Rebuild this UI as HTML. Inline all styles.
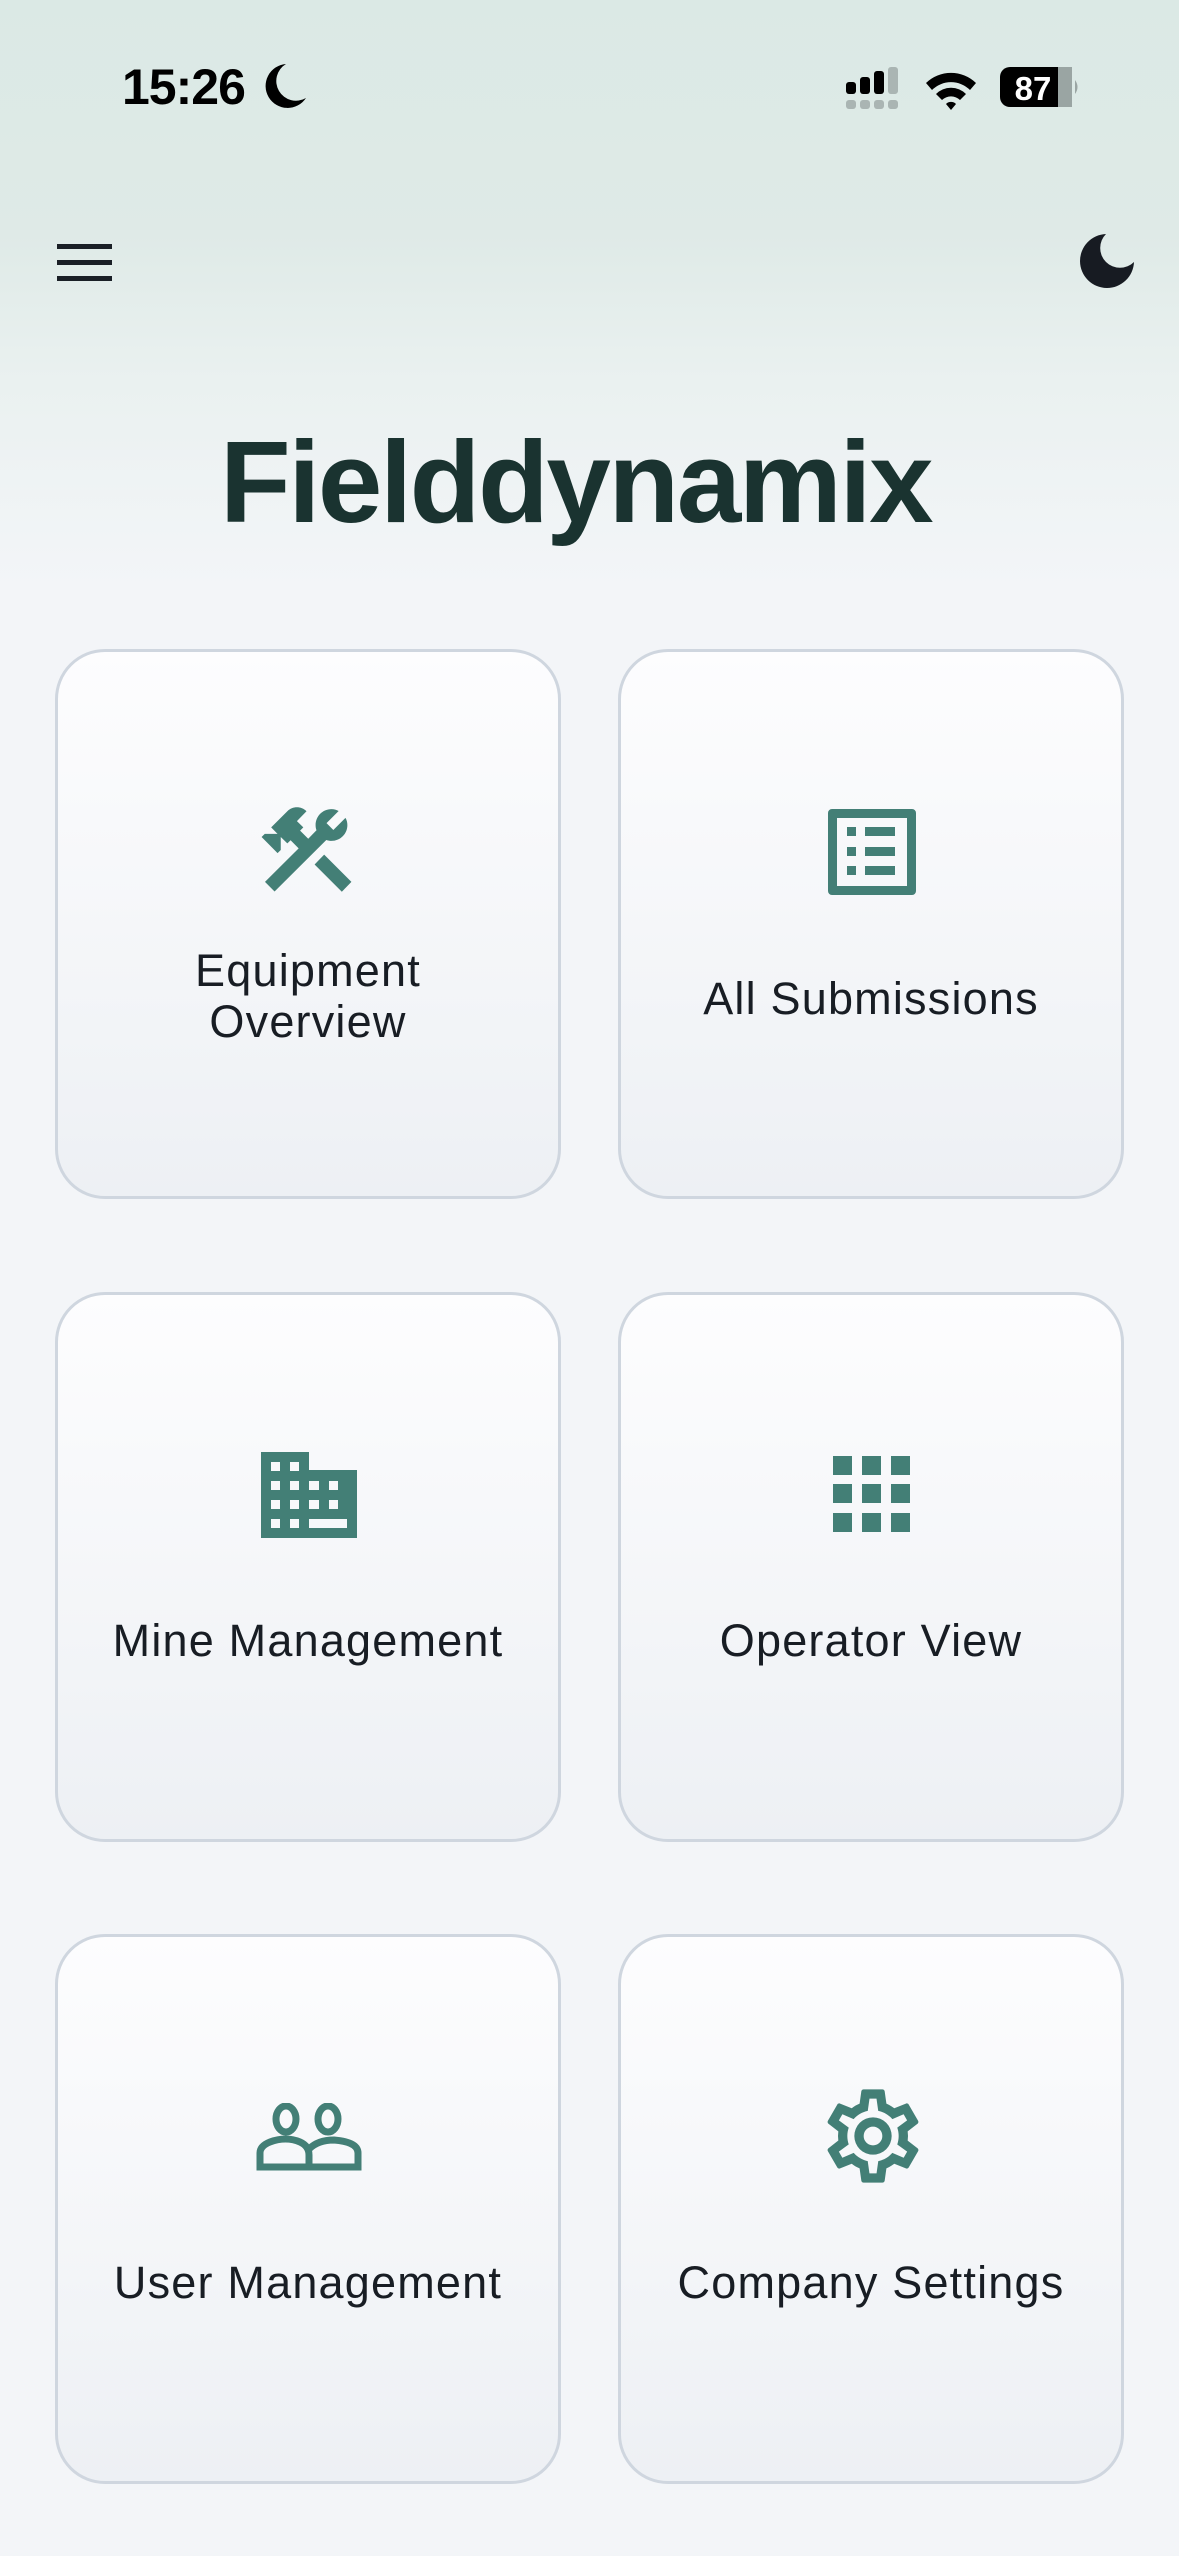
<!DOCTYPE html>
<html><head><meta charset="utf-8"><style>
*{margin:0;padding:0;box-sizing:border-box}
body{width:1179px;height:2556px;background:#f3f5f8;font-family:"Liberation Sans",sans-serif;position:relative;overflow:hidden}
.hdr{position:absolute;left:0;top:0;width:1179px;height:587px;background:linear-gradient(#dbe9e5 0%,#dfeae7 40%,#eaf1f0 65%,#f3f5f8 100%)}
.time{position:absolute;left:122px;top:58px;font-size:50px;font-weight:bold;color:#000;letter-spacing:-1px}
.title{position:absolute;left:-14px;width:1179px;top:412px;text-align:center;font-size:116px;font-weight:bold;color:#1a3330;letter-spacing:-2.5px;line-height:140px}
.card{position:absolute;width:506px;height:550px;border:3px solid #cfd6df;border-radius:50px;background:linear-gradient(#fdfdfe,#edf0f4)}
.lbl{position:absolute;left:0;width:100%;text-align:center;font-size:45px;color:#181d24;line-height:51px;letter-spacing:1.2px}
.card svg{position:absolute}
</style></head><body>
<div class="hdr"></div>
<div class="time">15:26</div>
<svg style="position:absolute;left:262px;top:62px" width="46" height="50" viewBox="0 0 46 50"><path d="M24 2 A22 22 0 1 0 44 36 A18 18 0 0 1 24 2Z" fill="#000"/></svg>
<svg style="position:absolute;left:840px;top:60px" width="240" height="55" viewBox="0 0 240 55">
<g fill="#000"><rect x="6" y="22" width="10" height="12" rx="3"/><rect x="20" y="17" width="10" height="17" rx="3"/><rect x="34" y="11" width="10" height="23" rx="3"/></g>
<rect x="48" y="7" width="10" height="27" rx="3" fill="#aab5b3"/>
<g fill="#aab5b3"><rect x="6" y="40" width="10" height="9" rx="3"/><rect x="20" y="40" width="10" height="9" rx="3"/><rect x="34" y="40" width="10" height="9" rx="3"/><rect x="48" y="40" width="10" height="9" rx="3"/></g>
<path d="M86 23 A36 36 0 0 1 136 23 L130 30 A27 27 0 0 0 92 30Z M96 34 A21 21 0 0 1 126 34 L120 40 A13 13 0 0 0 102 40Z M106 44 A7 7 0 0 1 116 44 L111 50Z" fill="#000"/>
<rect x="160" y="7" width="72" height="40" rx="10" fill="#000"/>
<rect x="218" y="7" width="14" height="40" fill="#9aa5a3"/>
<path d="M235 20 Q240 27 235 34Z" fill="#9aa5a3"/>
<text x="193" y="40" font-size="33" font-weight="bold" fill="#fff" text-anchor="middle" font-family="Liberation Sans">87</text>
</svg>
<svg style="position:absolute;left:57px;top:244px" width="55" height="37"><g fill="#1a1f26"><rect y="0" width="55" height="5"/><rect y="16" width="55" height="5"/><rect y="32" width="55" height="5"/></g></svg>
<svg style="position:absolute;left:1078px;top:232px" width="58" height="58" viewBox="0 0 58 58"><path d="M28 2 A27 27 0 1 0 56 30 A16 16 0 0 1 28 2Z" fill="#171b22"/></svg>
<div class="title">Fielddynamix</div>

<div class="card" style="left:55px;top:649px">
<svg style="left:194px;top:143px" width="109" height="109" viewBox="0 0 24 24"><path fill="#437f76" d="M13.78 15.3L19.78 21.3L21.89 19.14L15.89 13.14L13.78 15.3M17.5 10.1C17.11 10.1 16.69 10.05 16.36 9.91L4.97 21.25L2.86 19.14L10.27 11.74L8.5 9.960L7.78 10.66L6.33 9.25V12.11L5.63 12.81L2.11 9.25L2.81 8.55H5.62L4.22 7.14L7.78 3.58C8.95 2.41 10.830 2.41 12 3.58L9.89 5.74L11.3 7.14L10.59 7.85L12.38 9.63L14.2 7.75C14.06 7.42 14 7 14 6.63C14 4.66 15.56 3.11 17.5 3.11C18.09 3.11 18.61 3.25 19.08 3.53L16.41 6.2L17.91 7.7L20.58 5.03C20.86 5.5 21 6 21 6.63C21 8.550 19.45 10.1 17.5 10.1Z"/></svg>
<div class="lbl" style="top:293px">Equipment<br>Overview</div>
</div>

<div class="card" style="left:618px;top:649px">
<svg style="left:207px;top:157px" width="88" height="88" viewBox="0 0 88 88"><g fill="#437f76"><path fill-rule="evenodd" d="M0 4a4 4 0 0 1 4-4h80a4 4 0 0 1 4 4v78a4 4 0 0 1-4 4H4a4 4 0 0 1-4-4Z M9 9v68h70V9Z"/><rect x="19" y="18" width="9" height="9"/><rect x="37" y="18" width="30" height="9"/><rect x="19" y="38" width="9" height="9"/><rect x="37" y="38" width="30" height="9"/><rect x="19" y="57" width="9" height="9"/><rect x="37" y="57" width="30" height="9"/></g></svg>
<div class="lbl" style="top:321px">All Submissions</div>
</div>

<div class="card" style="left:55px;top:1292px">
<svg style="left:203px;top:157px" width="96" height="86" viewBox="0 0 96 86"><path fill="#437f76" fill-rule="evenodd" d="M0 0h48v18h48v68H0Z M10 10h9v9h-9Z M29 10h9v9h-9Z M10 29h9v9h-9Z M29 29h9v9h-9Z M10 48h9v9h-9Z M29 48h9v9h-9Z M10 67h9v9h-9Z M29 67h9v9h-9Z M48 29h10v9h-10Z M48 48h10v9h-10Z M68 29h9v9h-9Z M68 48h9v9h-9Z M48 67h38v9h-38Z"/></svg>
<div class="lbl" style="top:320px">Mine Management</div>
</div>

<div class="card" style="left:618px;top:1292px">
<svg style="left:212px;top:161px" width="78" height="78" viewBox="0 0 78 78"><g fill="#437f76"><rect x="0" y="0" width="19" height="19"/><rect x="29" y="0" width="19" height="19"/><rect x="58" y="0" width="19" height="19"/><rect x="0" y="28" width="19" height="19"/><rect x="29" y="28" width="19" height="19"/><rect x="58" y="28" width="19" height="19"/><rect x="0" y="57" width="19" height="19"/><rect x="29" y="57" width="19" height="19"/><rect x="58" y="57" width="19" height="19"/></g></svg>
<div class="lbl" style="top:320px">Operator View</div>
</div>

<div class="card" style="left:55px;top:1934px">
<svg style="left:198px;top:166px" width="106" height="68" viewBox="0 0 106 68"><g fill="none" stroke="#437f76" stroke-width="7"><ellipse cx="30" cy="16" rx="10" ry="13"/><ellipse cx="72" cy="16" rx="10" ry="13"/><path d="M4 64V50Q4 43 14 39Q30 33 44 39Q53 43 53 52V64Z"/><path d="M53 46Q62 37 78 37Q102 39 102 50V64H53"/></g></svg>
<div class="lbl" style="top:320px">User Management</div>
</div>

<div class="card" style="left:618px;top:1934px">
<svg style="left:196px;top:143px" width="112" height="112" viewBox="0 0 24 24"><path fill="#437f76" d="M12 8A4 4 0 0 1 16 12A4 4 0 0 1 12 16A4 4 0 0 1 8 12A4 4 0 0 1 12 8M12 10A2 2 0 0 0 10 12A2 2 0 0 0 12 14A2 2 0 0 0 14 12A2 2 0 0 0 12 10M10 22C9.75 22 9.54 21.82 9.5 21.58L9.13 18.93C8.5 18.68 7.96 18.34 7.44 17.94L4.95 18.95C4.73 19.03 4.46 18.95 4.34 18.73L2.34 15.27C2.21 15.05 2.27 14.78 2.46 14.63L4.57 12.97L4.5 12L4.57 11L2.46 9.37C2.27 9.22 2.21 8.95 2.34 8.73L4.34 5.27C4.46 5.05 4.73 4.96 4.95 5.05L7.44 6.050C7.96 5.66 8.500 5.32 9.13 5.07L9.5 2.42C9.54 2.18 9.75 2 10 2H14C14.25 2 14.46 2.18 14.5 2.42L14.87 5.07C15.5 5.32 16.04 5.66 16.56 6.05L19.05 5.05C19.27 4.96 19.54 5.05 19.66 5.27L21.66 8.73C21.79 8.95 21.73 9.22 21.54 9.37L19.43 11L19.5 12L19.43 13L21.54 14.63C21.73 14.78 21.790 15.05 21.66 15.27L19.66 18.73C19.54 18.95 19.27 19.04 19.05 18.95L16.56 17.95C16.04 18.34 15.5 18.68 14.87 18.93L14.5 21.58C14.46 21.82 14.25 22 14 22H10M11.25 4L10.88 6.61C9.68 6.86 8.62 7.5 7.85 8.39L5.44 7.35L4.69 8.650L6.8 10.2C6.4 11.370 6.4 12.64 6.8 13.8L4.68 15.36L5.43 16.66L7.86 15.62C8.63 16.5 9.68 17.14 10.87 17.38L11.24 20H12.76L13.13 17.39C14.32 17.14 15.37 16.5 16.14 15.62L18.57 16.66L19.32 15.36L17.2 13.81C17.6 12.64 17.6 11.37 17.2 10.2L19.31 8.65L18.56 7.35L16.15 8.39C15.38 7.5 14.32 6.86 13.12 6.62L12.75 4H11.25Z"/></svg>
<div class="lbl" style="top:320px">Company Settings</div>
</div>
</body></html>
